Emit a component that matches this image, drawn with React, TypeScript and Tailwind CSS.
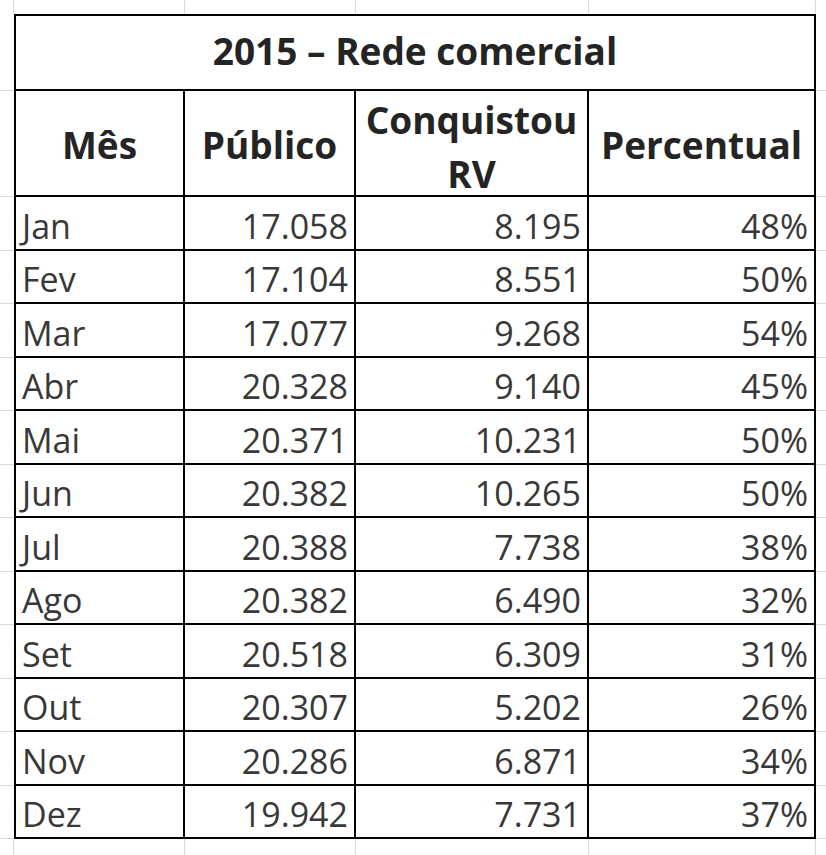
const linhas = [
  ["Jan", "17.058", "8.195", "48%"],
  ["Fev", "17.104", "8.551", "50%"],
  ["Mar", "17.077", "9.268", "54%"],
  ["Abr", "20.328", "9.140", "45%"],
  ["Mai", "20.371", "10.231", "50%"],
  ["Jun", "20.382", "10.265", "50%"],
  ["Jul", "20.388", "7.738", "38%"],
  ["Ago", "20.382", "6.490", "32%"],
  ["Set", "20.518", "6.309", "31%"],
  ["Out", "20.307", "5.202", "26%"],
  ["Nov", "20.286", "6.871", "34%"],
  ["Dez", "19.942", "7.731", "37%"],
];

function Gutter({ bottom = true }: { bottom?: boolean }) {
  return <div className={bottom ? "border-b border-[#d9d9d9]" : ""} />;
}

export default function App() {
  return (
    <div
      className="w-[826px] h-[855px] bg-white overflow-hidden grid grid-cols-[14px_171px_171px_233px_227px_10px] grid-rows-[14px_77px_106px_repeat(6,54px_53px)_1fr] text-[34px] leading-[46px] text-[#383838]"
      style={{ fontFamily: '"Open Sans", "Noto Sans", sans-serif' }}
    >
      {/* faixa superior */}
      <div className="border-r border-[#d9d9d9]" />
      <div className="border-r border-[#d9d9d9]" />
      <div className="border-r border-[#d9d9d9]" />
      <div className="border-r border-[#d9d9d9]" />
      <div className="border-r border-[#d9d9d9]" />
      <div />

      {/* título */}
      <Gutter />
      <div className="col-span-4 border-2 border-black flex items-center justify-center pb-1 font-bold text-[37px] text-[#242424]">
        2015 – Rede comercial
      </div>
      <Gutter />

      {/* cabeçalho */}
      <Gutter />
      <div className="border-l-2 border-r-2 border-b-2 border-black flex items-center justify-center pt-1 font-bold text-[37px] text-[#242424]">
        Mês
      </div>
      <div className="border-r-2 border-b-2 border-black flex items-center justify-center pt-1 font-bold text-[37px] text-[#242424]">
        Público
      </div>
      <div className="border-r-2 border-b-2 border-black flex items-center justify-center pt-2 font-bold text-[37px] text-[#242424] text-center leading-[54px]">
        Conquistou
        <br />
        RV
      </div>
      <div className="border-r-2 border-b-2 border-black flex items-center justify-center pt-1 font-bold text-[37px] text-[#242424]">
        Percentual
      </div>
      <Gutter />

      {/* meses */}
      {linhas.map(([mes, publico, rv, pct]) => (
        <div key={mes} className="contents">
          <Gutter />
          <div className="border-l-2 border-r-2 border-b-2 border-black flex items-end pl-[6px]">{mes}</div>
          <div className="border-r-2 border-b-2 border-black flex items-end justify-end pr-[6px]">{publico}</div>
          <div className="border-r-2 border-b-2 border-black flex items-end justify-end pr-[6px]">{rv}</div>
          <div className="border-r-2 border-b-2 border-black flex items-end justify-end pr-[6px]">{pct}</div>
          <Gutter />
        </div>
      ))}

      {/* faixa inferior */}
      <div className="border-r border-[#d9d9d9]" />
      <div className="border-r border-[#d9d9d9]" />
      <div className="border-r border-[#d9d9d9]" />
      <div className="border-r border-[#d9d9d9]" />
      <div className="border-r border-[#d9d9d9]" />
      <div />
    </div>
  );
}
